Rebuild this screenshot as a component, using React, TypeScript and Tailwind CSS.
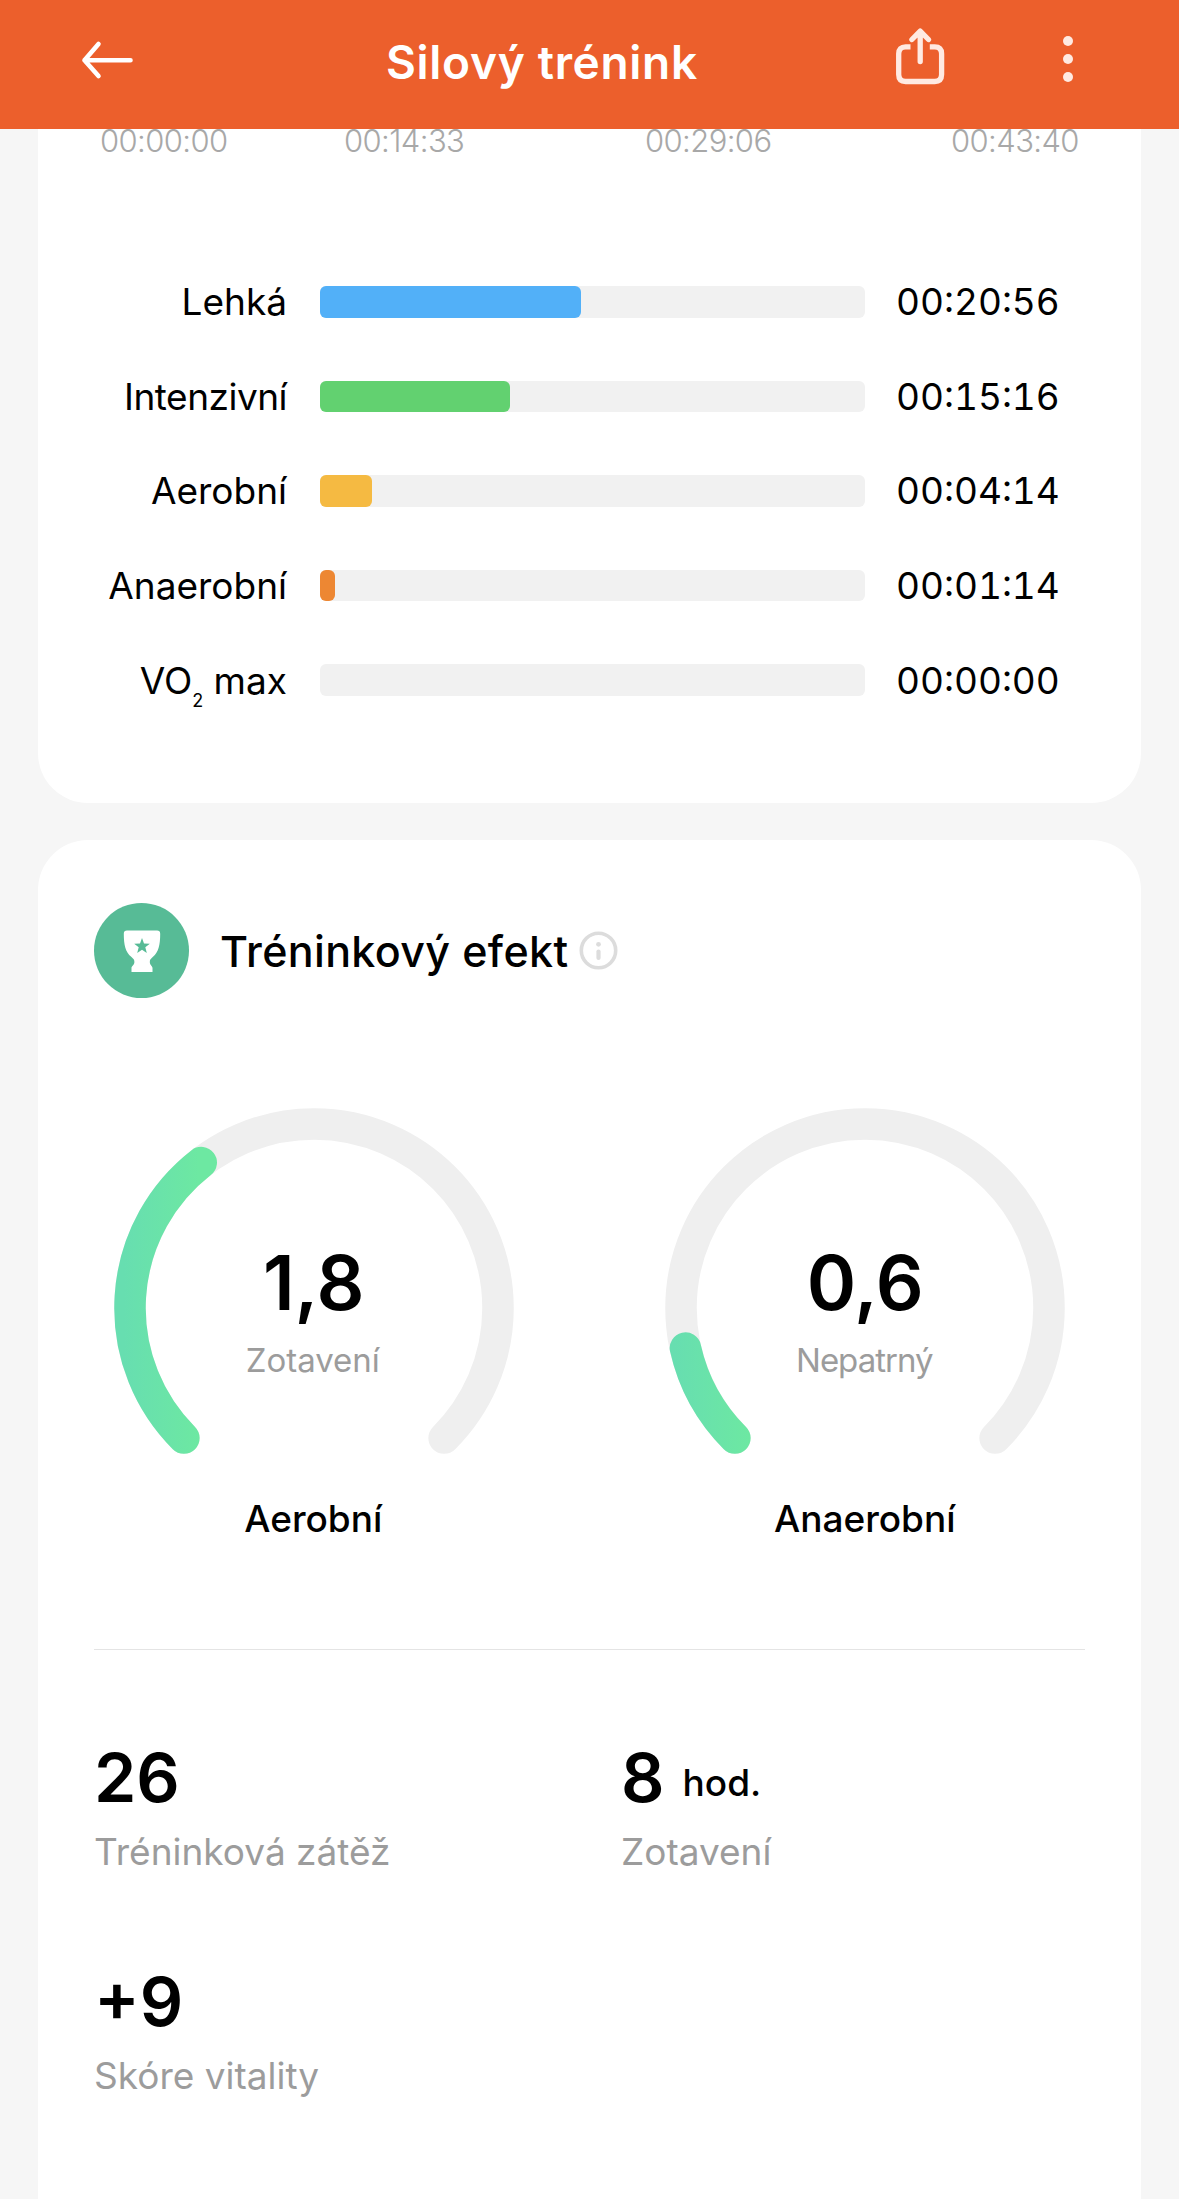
import React from 'react';

interface Zone {
    label: React.ReactNode;
    time: string;
    width: number;
    color: string;
}

interface GaugeProps {
    id: string;
    value: number;
    text: string;
    status: React.ReactNode;
    name: string;
}

interface StatProps {
    value: string;
    unit?: string;
    label: string;
}

const AXIS_LABELS = ['00:00:00', '00:14:33', '00:29:06', '00:43:40'];

const ZONES: Zone[] = [
    { label: 'Lehká', time: '00:20:56', width: 261, color: 'bg-[#52b0f8]' },
    { label: <span className="tracking-[-0.5px]">Intenzivní</span>, time: '00:15:16', width: 190, color: 'bg-[#62d170]' },
    { label: 'Aerobní', time: '00:04:14', width: 52, color: 'bg-[#f5ba42]' },
    { label: 'Anaerobní', time: '00:01:14', width: 15, color: 'bg-[#ed8733]' },
    {
        label: (
            <>
                VO<span className="inline-block translate-y-[13px] text-[18px] leading-none">2</span> max
            </>
        ),
        time: '00:00:00',
        width: 0,
        color: '',
    },
];

const MAX_EFFECT = 5;
const RADIUS = 184;

// The gauge opens downwards: it starts at 225° and covers 270°
const arcPath = (ratio: number) => {
    const sweep = 270 * ratio;
    const point = (deg: number) => {
        const rad = (deg * Math.PI) / 180;
        return `${200 + RADIUS * Math.sin(rad)} ${200 - RADIUS * Math.cos(rad)}`;
    };
    return `M ${point(-135)} A ${RADIUS} ${RADIUS} 0 ${sweep > 180 ? 1 : 0} 1 ${point(-135 + sweep)}`;
};

const Header: React.FC = () => (
    <header className="flex h-[129px] bg-[#ec5f2c] text-white">
        <svg className="mt-[40px] ml-[80px] h-[40px] w-[56px]" viewBox="0 0 56 40" fill="none" stroke="currentColor" strokeWidth="4.6" strokeLinecap="round" strokeLinejoin="round">
            <path d="M50.5 20.3H4.5M18.5 4L4.5 20.3L18.5 36" />
        </svg>
        <h1 className="mt-[32px] ml-[250px] w-[507px] text-[46px] leading-[60px] font-semibold tracking-[0.7px] whitespace-nowrap">Silový trénink</h1>
        <svg className="mt-[26px] h-[60px] w-[54px] text-[#ffeae2]" viewBox="0 0 54 60" fill="none" stroke="currentColor" strokeWidth="5.3" strokeLinecap="round" strokeLinejoin="round">
            <path strokeLinecap="butt" d="M17.5 20.9H12.6Q5.7 20.9 5.7 27.8V48.6Q5.7 55.5 12.6 55.5H41.7Q48.6 55.5 48.6 48.6V27.8Q48.6 20.9 41.7 20.9H36.8" />
            <path d="M27.2 35.6V5.9M18.9 13.5L27.2 5.1L35.5 13.5" />
        </svg>
        <div className="mt-[36px] ml-[116px] flex flex-col gap-[7.6px]">
            <span className="size-[10.4px] rounded-full bg-[#ffeae2]" />
            <span className="size-[10.4px] rounded-full bg-[#ffeae2]" />
            <span className="size-[10.4px] rounded-full bg-[#ffeae2]" />
        </div>
    </header>
);

const ZoneRow: React.FC<{ zone: Zone }> = ({ zone }) => (
    <div className="flex h-[94.6px] items-center text-[37px] leading-[46px] text-black">
        <div className="w-[249px] pt-[1px] text-right whitespace-nowrap">{zone.label}</div>
        <div className="ml-[33px] h-[31.5px] w-[545px] rounded-[6px] bg-[#f1f1f1]">
            <div className={`h-full rounded-[6px] ${zone.color}`} style={{ width: zone.width }} />
        </div>
        <div className="ml-[31px] pt-[1px] tabular-nums">{zone.time}</div>
    </div>
);

const Gauge: React.FC<GaugeProps> = ({ id, value, text, status, name }) => (
    <div className="flex flex-col items-center">
        <div className="relative h-[350px] w-[400px]">
            <svg className="h-full w-full" viewBox="0 0 400 350" fill="none" strokeWidth="31.5" strokeLinecap="round">
                <defs>
                    <linearGradient id={id} gradientUnits="userSpaceOnUse" x1="10" y1="0" x2="85" y2="0">
                        <stop offset="0" stopColor="#67deb0" />
                        <stop offset="1" stopColor="#6de8a2" />
                    </linearGradient>
                </defs>
                <path d={arcPath(1)} stroke="#efefef" />
                <path d={arcPath(value / MAX_EFFECT)} stroke={`url(#${id})`} />
            </svg>
            <div className="absolute inset-0 flex flex-col items-center pt-[137px]">
                <div className="text-[75px] leading-[75px] font-semibold">{text}</div>
                <div className="mt-[20px] mr-[2px] text-[33px] leading-[40px] text-[#9c9c9c]">{status}</div>
            </div>
        </div>
        <div className="mt-[39px] mr-[1px] text-[37px] leading-[44px] font-medium">{name}</div>
    </div>
);

const Stat: React.FC<StatProps> = ({ value, unit, label }) => (
    <div>
        <div className="flex h-[80px] items-end">
            <span className="text-[68px] leading-[80px] font-semibold">{value}</span>
            {unit && <span className="mb-[12px] ml-[18px] text-[37px] leading-[44px] font-medium">{unit}</span>}
        </div>
        <div className="mt-[12px] text-[37px] leading-[46px] text-[#9c9c9c]">{label}</div>
    </div>
);

export default function App() {
    return (
        <div className="h-[2199px] w-[1179px] overflow-hidden bg-[#f6f6f6] font-['Inter','Liberation_Sans',sans-serif] text-black">
            <Header />

            {/* Heart rate zones */}
            <section className="mx-[38px] h-[674px] rounded-b-[50px] bg-white">
                <div className="grid grid-cols-[244px_301px_306px_auto] pl-[62px] text-[31px] leading-[24px] font-light tracking-[-0.6px] text-[#a8a8a8]">
                    {AXIS_LABELS.map(label => (
                        <span key={label}>{label}</span>
                    ))}
                </div>
                <div className="pt-[101.5px]">
                    {ZONES.map(zone => (
                        <ZoneRow key={zone.time} zone={zone} />
                    ))}
                </div>
            </section>

            {/* Training effect */}
            <section className="mx-[38px] mt-[37px] h-[1400px] rounded-t-[50px] bg-white pt-[63px]">
                <div className="flex items-center pl-[56px]">
                    <div className="flex size-[95px] items-center justify-center rounded-full bg-[#57bb96]">
                        <svg className="h-[42px] w-[38px]" viewBox="0 0 38 42">
                            <path fill="#fff" d="M4 0.5H34Q37.2 0.5 37.2 3.7C37.2 15 35.5 22 30 26.8C27.6 28.8 26.8 30 26.8 32C26.8 35.3 29.5 36 29.5 38V42H8.5V38C8.5 36 11.4 35.3 11.4 32C11.4 30 10.6 28.8 8.2 26.8C2.5 22 0.8 15 0.8 3.7Q0.8 0.5 4 0.5Z" />
                            <path fill="#57bb96" d="M19 8L21 13.4L26.8 13.7L22.3 17.3L23.8 22.9L19 19.7L14.2 22.9L15.7 17.3L11.2 13.7L17 13.4Z" />
                        </svg>
                    </div>
                    <h2 className="mt-[1px] ml-[31px] w-[357px] text-[43px] leading-[56px] font-medium tracking-[0.35px] whitespace-nowrap">Tréninkový efekt</h2>
                    <svg className="ml-[2px] size-[40px]" viewBox="0 0 40 40" fill="none" stroke="#dcdcdc">
                        <circle cx="19.5" cy="19.5" r="17.2" strokeWidth="3.6" />
                        <path d="M19.5 20.5V27" strokeWidth="4.2" strokeLinecap="round" />
                        <circle cx="19.5" cy="13.3" r="2.4" fill="#dcdcdc" stroke="none" />
                    </svg>
                </div>

                <div className="mt-[110px] grid grid-cols-2">
                    <Gauge id="aerobic" value={1.8} text="1,8" status="Zotavení" name="Aerobní" />
                    <Gauge id="anaerobic" value={0.6} text="0,6" status={<span className="tracking-[-1px]">Nepatrný</span>} name="Anaerobní" />
                </div>

                <div className="mx-[56px] mt-[108px] h-px bg-[#e4e4e4]" />

                <div className="mt-[87px] grid grid-cols-[527px_auto] gap-y-[85.5px] pl-[56px]">
                    <Stat value="26" label="Tréninková zátěž" />
                    <Stat value="8" unit="hod." label="Zotavení" />
                    <Stat value="+9" label="Skóre vitality" />
                </div>
            </section>
        </div>
    );
}
